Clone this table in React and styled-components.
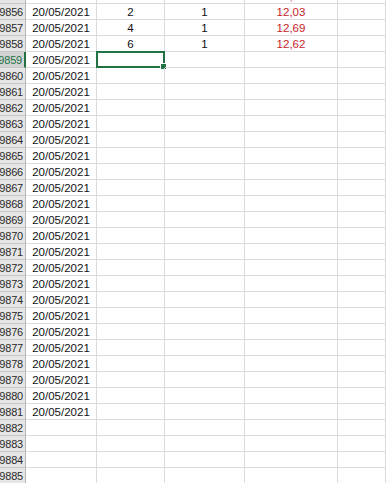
import React from 'react';
import styled, { createGlobalStyle } from 'styled-components';

const Global = createGlobalStyle`
  html, body {
    margin: 0;
    padding: 0;
    background: #ffffff;
    overflow: hidden;
  }
  body {
    font-family: "Liberation Sans", Arial, sans-serif;
  }
`;

const Sheet = styled.div`
  width: 386px;
  height: 483px;
  overflow: hidden;
`;

const Grid = styled.div`
  display: grid;
  grid-template-columns: 26px 71px 68px 80px 93px 1fr;
  grid-auto-rows: 16px;
  margin-top: -12px;
`;

const RowHead = styled.div`
  display: flex;
  align-items: center;
  justify-content: flex-end;
  overflow: hidden;
  box-sizing: border-box;
  padding-right: 2px;
  white-space: nowrap;
  font-size: 11px;
  letter-spacing: -0.2px;
  background: ${p => (p.$active ? '#d2d2d2' : '#e6e6e6')};
  color: ${p => (p.$active ? '#217346' : '#2a2a2a')};
  border-bottom: 1px solid #c8c8c8;
  border-right: ${p => (p.$active ? '2px solid #217346' : '1px solid #b4b4b4')};
`;

const Cell = styled.div`
  position: relative;
  display: flex;
  align-items: center;
  justify-content: center;
  box-sizing: border-box;
  white-space: nowrap;
  font-size: 11.5px;
  color: ${p => (p.$red ? '#c8222a' : '#111111')};
  border-right: 1px solid #dadcdd;
  border-bottom: 1px solid #dadcdd;
`;

const Selection = styled.div`
  position: absolute;
  left: -1px;
  top: -1px;
  right: -1px;
  bottom: -1px;
  border: 2px solid #217346;
  pointer-events: none;
  &::after {
    content: '';
    position: absolute;
    right: -4px;
    bottom: -4px;
    width: 5px;
    height: 5px;
    background: #217346;
    border: 1px solid #ffffff;
  }
`;

const data = {
  9855: ['', '', '12,41'],
  9856: ['2', '1', '12,03'],
  9857: ['4', '1', '12,69'],
  9858: ['6', '1', '12,62'],
};

const rows = [];
for (let n = 9855; n <= 9885; n++) rows.push(n);

export default function App() {
  return (
    <Sheet>
      <Global />
      <Grid>
        {rows.map(n => {
          const vals = data[n] || ['', '', ''];
          const hasDate = n > 9855 && n <= 9881;
          const active = n === 9859;
          return (
            <React.Fragment key={n}>
              <RowHead $active={active}>{n > 9855 ? n : ''}</RowHead>
              <Cell>{hasDate ? '20/05/2021' : ''}</Cell>
              <Cell>
                {vals[0]}
                {active && <Selection />}
              </Cell>
              <Cell>{vals[1]}</Cell>
              <Cell $red>{vals[2]}</Cell>
              <Cell />
            </React.Fragment>
          );
        })}
      </Grid>
    </Sheet>
  );
}
